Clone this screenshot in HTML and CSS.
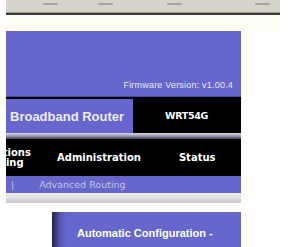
FILE: index.html
```html
<!DOCTYPE html>
<html lang="en">
<head>
    <meta charset="UTF-8">
    <title>Broadband Router</title>
    <link rel="stylesheet" href="styles.css">
</head>
<body>
    <div class="toolbar">
        <span class="grip g1"></span>
        <span class="grip g2"></span>
        <span class="grip g3"></span>
        <span class="grip g4"></span>
    </div>
    <div class="strip"></div>
    <div class="page">
        <div class="header">
            <div class="firmware">Firmware Version: v1.00.4</div>
        </div>
        <div class="titlebar">
            <div class="product">Broadband Router</div>
            <div class="model">WRT54G</div>
        </div>
        <div class="bevel"></div>
        <div class="nav">
            <div class="tab first">Applications<br>&amp; Gaming</div>
            <div class="tab admin">Administration</div>
            <div class="tab status">Status</div>
        </div>
        <div class="subnav">
            <span class="sep">|</span>
            <span class="sublink">Advanced Routing</span>
        </div>
        <div class="lightbar"></div>
        <div class="content">
            <div class="side"></div>
            <div class="panel">
                <div class="panel-title">Automatic Configuration -</div>
            </div>
        </div>
    </div>
</body>
</html>
```

FILE: styles.css
```css
body { margin: 0; background: #fff; font-family: "DejaVu Sans", Verdana, sans-serif; overflow: hidden; }

.toolbar { position: relative; margin-left: 6px; width: 274px; height: 12px; background: #d6d3ca; border-bottom: 1px solid #9a9890; }
.grip { position: absolute; top: 3px; width: 15px; height: 2px; border-radius: 1px; background: #a8a69e; }
.g1 { left: 37px; }
.g2 { left: 92px; }
.g3 { left: 161px; }
.g4 { left: 249px; }
.strip { margin-left: 6px; width: 274px; height: 16px; background: #fffff6; border-top: 2px solid #3a3a3a; }

.page { margin-left: 6px; width: 235px; }

.header { height: 65px; background: #6666cc; display: flex; align-items: flex-end; justify-content: flex-end; border-bottom: 1px solid #4a4a9a; }
.firmware { font-family: "Liberation Sans", Arial, sans-serif; font-size: 9px; letter-spacing: 0.2px; color: #e8e8f4; padding: 0 8px 6px 0; }

.titlebar { height: 36px; background: #000; display: flex; align-items: stretch; }
.product { width: 127px; margin-top: 2px; background: #6666cc; color: #ececf6; font-family: "Liberation Sans", Arial, sans-serif; font-weight: bold; font-size: 13px; white-space: nowrap; display: flex; align-items: center; padding-left: 4px; box-sizing: border-box; }
.model { margin-left: 32px; color: #fff; font-weight: bold; font-size: 9.5px; display: flex; align-items: center; letter-spacing: -0.3px; }

.bevel { height: 6px; background: linear-gradient(#d8d8e4, #9a9ab0 50%, #3a3a58); }

.nav { height: 37px; background: #000; display: flex; align-items: center; overflow: hidden; color: #fff; font-weight: bold; font-size: 10px; }
.tab { text-align: center; line-height: 10px; white-space: nowrap; }
.first { width: 70px; margin-left: -45px; flex: none; }
.admin { margin-left: 26px; }
.status { margin-left: 38px; }

.subnav { height: 17px; background: #6666cc; color: #c4c4e6; font-size: 9.5px; display: flex; align-items: center; overflow: hidden; }
.sep { margin-left: 5px; }
.sublink { margin-left: 25px; }

.lightbar { height: 10px; background: linear-gradient(#ececec, #dcdcdc 60%, #c8c8c8); }

.content { display: flex; padding-top: 9px; }
.side { width: 46px; flex: none; }
.panel { flex: 1; height: 40px; background: linear-gradient(90deg, #22224a, #5555b0 8px, #6666cc 14px); }
.panel-title { color: #fff; font-family: "Liberation Sans", Arial, sans-serif; font-weight: bold; font-size: 11px; padding: 15px 0 0 25px; }
```
